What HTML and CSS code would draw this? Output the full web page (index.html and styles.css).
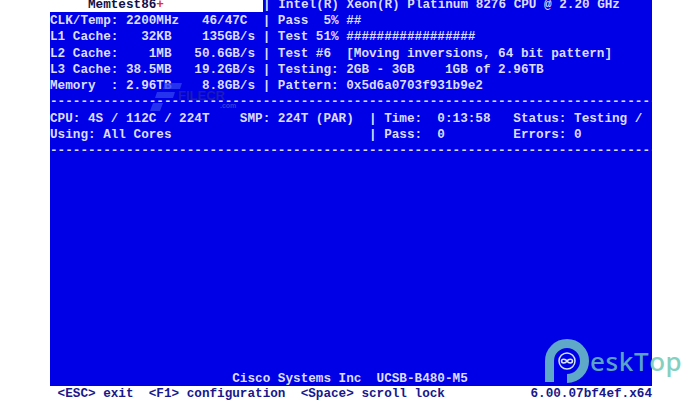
FILE: index.html
```html
<!DOCTYPE html>
<html lang="en">
<head>
<meta charset="utf-8">
<title>Memtest86+</title>
<link rel="stylesheet" href="styles.css">
</head>
<body>
<main class="console">
<section class="screen">
<div class="top">
<div class="row"><span class="banner">     Memtest86<span class="plus">+</span></span>| Intel(R) Xeon(R) Platinum 8276 CPU @ 2.20 GHz</div>
<div class="row">CLK/Temp: 2200MHz   46/47C  | Pass  5% ##</div>
<div class="row">L1 Cache:   32KB    135GB/s | Test 51% #################</div>
<div class="row">L2 Cache:    1MB   50.6GB/s | Test #6  [Moving inversions, 64 bit pattern]</div>
<div class="row">L3 Cache: 38.5MB   19.2GB/s | Testing: 2GB - 3GB    1GB of 2.96TB</div>
<div class="row">Memory  : 2.96TB    8.8GB/s | Pattern: 0x5d6a0703f931b9e2</div>
<div class="row">--------------------------------------------------------------------------------</div>
<div class="row">CPU: 4S / 112C / 224T    SMP: 224T (PAR)  | Time:  0:13:58   Status: Testing /</div>
<div class="row">Using: All Cores                          | Pass:  0         Errors: 0</div>
<div class="row">--------------------------------------------------------------------------------</div>
</div>
<div class="row">                        Cisco Systems Inc  UCSB-B480-M5</div>
</section>
<footer class="row keys"><span> &lt;ESC&gt; exit  &lt;F1&gt; configuration  &lt;Space&gt; scroll lock</span><span>6.00.07bf4ef.x64</span></footer>
</main>
<div class="filecr">
<svg class="filecr-mark" width="32" height="28" viewBox="0 0 32 28"><path d="M15 0h17l-2 6H13zM7 9h18l-2 6H5zM3 20h10l-3 8H0z"/></svg>
<span class="filecr-name">FILECR</span>
<span class="filecr-com">.com</span>
</div>
<div class="desktop">
<svg class="desktop-mark" width="45" height="44" viewBox="0 0 45 44"><path class="ring" d="M4.500 43V22a17.500 17.500 0 1 1 17.500 17.500"/><circle class="halo" cx="22" cy="22" r="8"/><path class="loop" d="M22 22c-1.500-2.500-5.500-2.500-5.500 0s4 2.500 5.500 0c1.500-2.500 5.500-2.500 5.500 0s-4 2.500-5.500 0z"/></svg>
<span class="desk">esk</span><span class="tee">T</span><span class="op">op</span>
</div>
</body>
</html>
```
FILE: styles.css
```css
html, body {
  margin: 0;
  height: 100%;
  background: #fff;
  overflow: hidden;
}
body {
  position: relative;
  width: 700px;
  height: 400px;
}
.console {
  display: flex;
  flex-direction: column;
  width: 602px;
  margin-left: 50px;
  font: bold 12.67px/16.26px "Liberation Mono", monospace;
}
.screen {
  display: flex;
  flex-direction: column;
  justify-content: space-between;
  height: 386px;
  overflow: hidden;
  background: #0000e6;
  color: #dcdcff;
  line-height: 18.26px;
}
.top {
  margin-top: -4.26px;
}
.row {
  height: 16.26px;
  white-space: pre;
}
.banner {
  display: inline-block;
  width: 213px;
  height: 16.26px;
  background: #fff;
  color: #10104a;
}
.plus {
  color: #e03030;
}
.keys {
  display: flex;
  justify-content: space-between;
  color: #18188c;
}
.filecr {
  position: absolute;
  left: 150px;
  top: 83px;
  width: 82px;
  height: 28px;
}
.filecr-mark {
  position: absolute;
  left: 0;
  top: 0;
  fill: #2f3ff0;
  opacity: .8;
}
.filecr-name {
  position: absolute;
  left: 28px;
  top: 6px;
  font: bold 13px/13px "Liberation Sans", sans-serif;
  color: #1c1cb8;
}
.filecr-com {
  position: absolute;
  left: 70px;
  top: 19px;
  font: bold 7px/7px "Liberation Sans", sans-serif;
  color: #3a3adc;
}
.desktop {
  position: absolute;
  left: 545px;
  top: 339px;
  display: flex;
  align-items: center;
  height: 44px;
  font: 500 26px/44px "Noto Sans", sans-serif;
  letter-spacing: .6px;
}
.desktop-mark {
  flex: none;
}
.ring {
  fill: none;
  stroke: #5fa8c8;
  stroke-width: 9;
}
.halo {
  fill: #0000e6;
  stroke: #cfe3f4;
  stroke-width: 1.500;
}
.loop {
  fill: none;
  stroke: #dce9f6;
  stroke-width: 1.500;
}
.desk, .tee {
  color: #5aa2c6;
}
.op {
  color: #84d0c0;
}
```
